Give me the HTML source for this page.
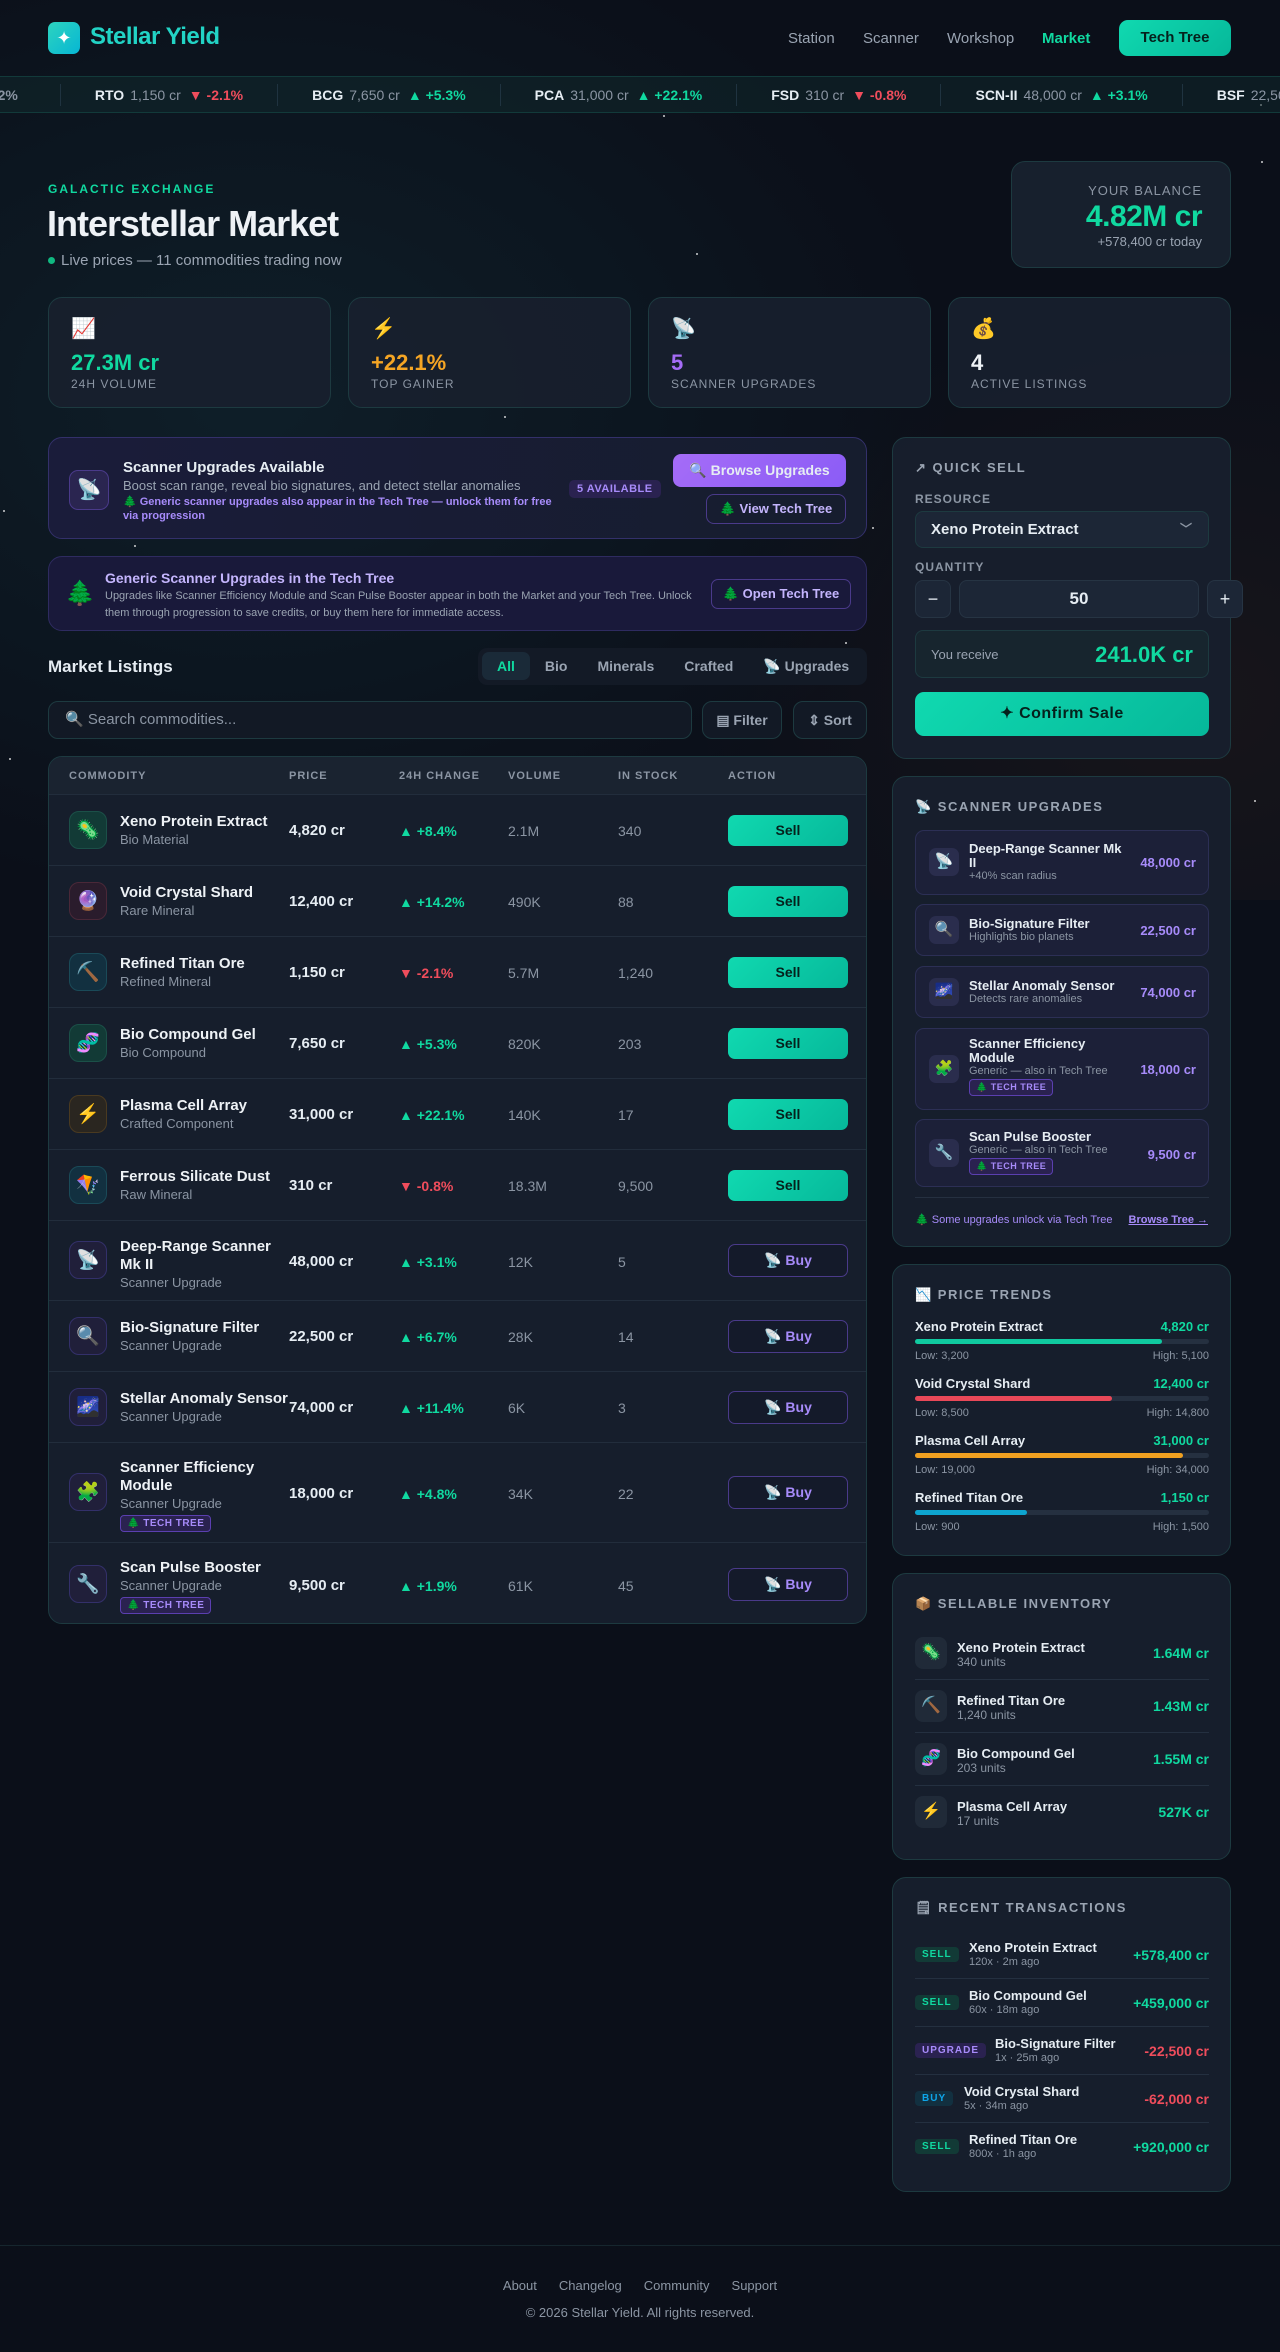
<!DOCTYPE html>
<html><head><meta charset="utf-8"><style>
*{box-sizing:border-box;margin:0;padding:0}
body{width:1280px;height:2352px;background:#0b0f19;font-family:"Liberation Sans",Arial,sans-serif;color:#e6edf3;position:relative;overflow:hidden}
.bgglow{position:absolute;left:0;top:0;width:1280px;height:900px;background:radial-gradient(ellipse 700px 500px at 250px 400px,rgba(20,60,70,.35),transparent),radial-gradient(ellipse 500px 400px at 1200px 700px,rgba(60,40,30,.25),transparent)}
.star{position:absolute;width:2px;height:2px;background:#fff;border-radius:50%;opacity:.8}
.abs{position:absolute}
.nav{position:absolute;left:0;top:0;width:1280px;height:76px}
.logo{position:absolute;left:48px;top:22px;width:32px;height:32px;border-radius:7px;background:linear-gradient(135deg,#2dd4bf,#06b6d4);color:#fff;text-align:center;line-height:32px;font-size:18px}
.brand{position:absolute;left:90px;top:23px;font-size:24px;font-weight:700;color:#22d3c5;letter-spacing:-.5px}
.navl{position:absolute;top:30px;font-size:15px;color:#9aa4b2}
.ttbtn{position:absolute;left:1119px;top:20px;width:112px;height:36px;border-radius:9px;background:linear-gradient(135deg,#10d9b0,#06b89a);color:#05211c;font-weight:700;font-size:15px;text-align:center;line-height:36px}
.ticker{position:absolute;left:0;top:76px;width:1280px;height:37px;background:rgba(16,40,44,.55);border-top:1px solid #123a3a;border-bottom:1px solid #123a3a;white-space:nowrap;overflow:hidden;font-size:14px;line-height:36px}
.ticker .in{position:absolute;left:-30px;top:0;display:flex}
.ti{padding:0 34px;border-right:1px solid #1f3340;height:22px;line-height:22px;margin-top:7px}
.ti b{color:#e6edf3;margin-right:6px}.ti span{color:#8b95a3;margin-right:8px}
.up{color:#10d9a0;font-weight:700}.dn{color:#f04d5c;font-weight:700}
.card{position:absolute;background:rgba(24,32,46,.92);border:1px solid #1d3a40;border-radius:14px}
.lbl{font-size:12px;letter-spacing:1px;color:#8b95a3;text-transform:uppercase}
.tab{display:inline-block;padding:0 15px;height:28px;line-height:28px;font-size:14px;font-weight:700;color:#9aa4b2;border-radius:7px}
.row{position:absolute;left:0;width:819px;border-top:1px solid #222d3c}
.ic{position:absolute;left:20px;width:38px;height:38px;border-radius:10px;text-align:center;line-height:38px;font-size:19px}
.nm{position:absolute;left:71px;font-size:15px;font-weight:700;color:#eef2f6;line-height:18px;width:163px}
.sb{font-size:13px;font-weight:400;color:#8b95a3;display:block;line-height:17px}
.pr{position:absolute;left:240px;font-size:15px;font-weight:700}
.ch{position:absolute;left:350px;font-size:14px}
.vo{position:absolute;left:459px;font-size:14px;color:#8b95a3}
.st{position:absolute;left:569px;font-size:14px;color:#8b95a3}
.sell{position:absolute;left:679px;width:120px;height:31px;border-radius:7px;background:linear-gradient(135deg,#10d9b0,#06b89a);color:#05211c;font-weight:700;font-size:14px;text-align:center;line-height:31px}
.buy{position:absolute;left:679px;width:120px;height:33px;border-radius:7px;border:1px solid #4a3a8a;color:#a78bfa;font-weight:700;font-size:14px;text-align:center;line-height:31px;background:#141a2a}
.tt{display:inline-block;font-size:10px;font-weight:700;color:#a78bfa;border:1px solid #5b3fb0;background:#2a2250;border-radius:4px;padding:1px 6px;margin-top:3px;line-height:13px;letter-spacing:.5px}
.sh{font-size:13px;font-weight:700;letter-spacing:1.5px;color:#9aa4b2;position:absolute;left:22px;top:22px}
.upg{position:absolute;left:22px;width:294px;background:#1c2038;border:1px solid #2c2f55;border-radius:9px}
.upg .i{position:absolute;left:13px;width:30px;height:28px;border-radius:7px;background:#2a2d4d;text-align:center;line-height:28px;font-size:15px}
.upg .t{position:absolute;left:53px;font-size:13px;font-weight:700;line-height:14px;width:160px}
.upg .t small{display:block;font-size:11px;font-weight:400;color:#8b95a3;line-height:13px}
.upg .p{position:absolute;right:12px;font-size:13px;font-weight:700;color:#a78bfa}
.tr{position:absolute;left:22px;width:294px;font-size:13px}
.bar{height:5px;border-radius:3px;background:#253040;margin-top:5px}
.inv{position:absolute;left:22px;width:294px;height:53px;border-bottom:1px solid #243040}
.inv .i{position:absolute;left:0;top:10px;width:32px;height:32px;border-radius:8px;background:#202a38;text-align:center;line-height:32px;font-size:16px}
.inv .t{position:absolute;left:42px;top:14px;font-size:13px;font-weight:700;line-height:14px}
.inv .t small{display:block;font-size:12px;font-weight:400;color:#8b95a3}
.inv .v{position:absolute;right:0;top:18px;font-size:14px;font-weight:700;color:#10d9a0}
.tx{position:absolute;left:22px;width:294px;height:48px;border-bottom:1px solid #243040}
.tx .b{position:absolute;top:16px;font-size:10px;font-weight:700;letter-spacing:1px;padding:2px 7px;border-radius:4px}
.tx .t{position:absolute;top:10px;font-size:13px;font-weight:700;line-height:14px}
.tx .t small{display:block;font-size:11px;font-weight:400;color:#8b95a3}
.tx .v{position:absolute;right:0;top:16px;font-size:14px;font-weight:700}
</style></head><body>
<div class="bgglow"></div>
<div class="star" style="left:663px;top:115px"></div><div class="star" style="left:1260px;top:104px"></div><div class="star" style="left:696px;top:253px"></div><div class="star" style="left:1261px;top:161px"></div><div class="star" style="left:3px;top:510px"></div><div class="star" style="left:134px;top:545px"></div><div class="star" style="left:872px;top:527px"></div><div class="star" style="left:850px;top:577px"></div><div class="star" style="left:1254px;top:800px"></div><div class="star" style="left:9px;top:758px"></div><div class="star" style="left:504px;top:416px"></div><div class="star" style="left:845px;top:642px"></div>

<div class="nav">
<div class="logo">✦</div><div class="brand">Stellar Yield</div>
<div class="navl" style="left:788px">Station</div><div class="navl" style="left:863px">Scanner</div><div class="navl" style="left:947px">Workshop</div><div class="navl" style="left:1042px;color:#10d9a0;font-weight:700">Market</div>
<div class="ttbtn">Tech Tree</div>
</div>
<div class="ticker"><div class="in">
<div class="ti" style="padding-left:0"><span class="up">+14.2%</span></div>
<div class="ti"><b>RTO</b><span>1,150 cr</span><i class="dn" style="font-style:normal">▼ -2.1%</i></div>
<div class="ti"><b>BCG</b><span>7,650 cr</span><i class="up" style="font-style:normal">▲ +5.3%</i></div>
<div class="ti"><b>PCA</b><span>31,000 cr</span><i class="up" style="font-style:normal">▲ +22.1%</i></div>
<div class="ti"><b>FSD</b><span>310 cr</span><i class="dn" style="font-style:normal">▼ -0.8%</i></div>
<div class="ti"><b>SCN-II</b><span>48,000 cr</span><i class="up" style="font-style:normal">▲ +3.1%</i></div>
<div class="ti"><b>BSF</b><span>22,500 cr</span><i class="up" style="font-style:normal">▲ +6.7%</i></div>
</div></div>

<div class="abs" style="left:48px;top:182px;font-size:12px;font-weight:700;letter-spacing:2px;color:#10d9a0">GALACTIC EXCHANGE</div>
<div class="abs" style="left:47px;top:203px;font-size:36px;font-weight:700;letter-spacing:-1px;color:#eef2f6">Interstellar Market</div>
<div class="abs" style="left:48px;top:252px;font-size:15px;color:#9aa4b2"><span style="display:inline-block;width:7px;height:7px;border-radius:50%;background:#10b981;margin-right:6px;vertical-align:1px"></span>Live prices — 11 commodities trading now</div>
<div class="card" style="left:1011px;top:161px;width:220px;height:107px;background:rgba(24,34,48,.9)">
<div class="abs" style="right:28px;top:21px;font-size:13px;letter-spacing:1px;color:#8b95a3">YOUR BALANCE</div>
<div class="abs" style="right:28px;top:38px;font-size:30px;font-weight:700;color:#10d9a0;letter-spacing:-.5px">4.82M cr</div>
<div class="abs" style="right:28px;top:72px;font-size:13px;color:#9aa4b2">+578,400 cr today</div>
</div>

<div class="card" style="left:48px;top:297px;width:283px;height:111px"><div class="abs" style="left:22px;top:18px;font-size:20px">📈</div><div class="abs" style="left:22px;top:52px;font-size:22px;font-weight:700;color:#10d9a0">27.3M cr</div><div class="abs lbl" style="left:22px;top:79px">24H VOLUME</div></div>
<div class="card" style="left:348px;top:297px;width:283px;height:111px"><div class="abs" style="left:22px;top:18px;font-size:20px">⚡</div><div class="abs" style="left:22px;top:52px;font-size:22px;font-weight:700;color:#f5a524">+22.1%</div><div class="abs lbl" style="left:22px;top:79px">TOP GAINER</div></div>
<div class="card" style="left:648px;top:297px;width:283px;height:111px"><div class="abs" style="left:22px;top:18px;font-size:20px">📡</div><div class="abs" style="left:22px;top:52px;font-size:22px;font-weight:700;color:#a56cf7">5</div><div class="abs lbl" style="left:22px;top:79px">SCANNER UPGRADES</div></div>
<div class="card" style="left:948px;top:297px;width:283px;height:111px"><div class="abs" style="left:22px;top:18px;font-size:20px">💰</div><div class="abs" style="left:22px;top:52px;font-size:22px;font-weight:700;color:#eef2f6">4</div><div class="abs lbl" style="left:22px;top:79px">ACTIVE LISTINGS</div></div>

<div class="card" style="left:48px;top:437px;width:819px;height:102px;background:linear-gradient(90deg,#1a1c3a,#161d2e);border-color:#33306a">
<div class="abs" style="left:20px;top:32px;width:40px;height:40px;border-radius:9px;background:#2a2550;border:1px solid #4a3a8a;text-align:center;line-height:38px;font-size:20px">📡</div>
<div class="abs" style="left:74px;top:21px;font-size:15px;font-weight:700">Scanner Upgrades Available</div>
<div class="abs" style="left:74px;top:40px;font-size:13px;color:#9aa4b2">Boost scan range, reveal bio signatures, and detect stellar anomalies</div>
<div class="abs" style="left:74px;top:57px;width:440px;font-size:11px;font-weight:700;color:#a78bfa;line-height:14px">🌲 Generic scanner upgrades also appear in the Tech Tree — unlock them for free via progression</div>
<div class="abs" style="left:520px;top:42px;font-size:11px;font-weight:700;color:#a78bfa;background:#2a2250;border-radius:5px;padding:3px 8px;letter-spacing:.5px">5 AVAILABLE</div>
<div class="abs" style="left:624px;top:16px;width:173px;height:33px;border-radius:8px;background:linear-gradient(135deg,#a56cf7,#8b5cf6);text-align:center;line-height:33px;font-size:14px;font-weight:700">🔍 Browse Upgrades</div>
<div class="abs" style="left:657px;top:56px;width:140px;height:30px;border-radius:8px;border:1px solid #4a3a8a;text-align:center;line-height:28px;font-size:13px;font-weight:700;color:#c4b5fd">🌲 View Tech Tree</div>
</div>
<div class="card" style="left:48px;top:556px;width:819px;height:75px;background:#19193a;border-color:#2e2b60">
<div class="abs" style="left:16px;top:22px;font-size:24px">🌲</div>
<div class="abs" style="left:56px;top:13px;font-size:14px;font-weight:700;color:#c4b5fd">Generic Scanner Upgrades in the Tech Tree</div>
<div class="abs" style="left:56px;top:31px;width:600px;font-size:11px;line-height:17px;color:#9aa4b2">Upgrades like Scanner Efficiency Module and Scan Pulse Booster appear in both the Market and your Tech Tree. Unlock them through progression to save credits, or buy them here for immediate access.</div>
<div class="abs" style="left:662px;top:22px;width:140px;height:30px;border-radius:7px;border:1px solid #4a3a8a;text-align:center;line-height:28px;font-size:13px;font-weight:700;color:#c4b5fd">🌲 Open Tech Tree</div>
</div>

<div class="abs" style="left:48px;top:657px;font-size:17px;font-weight:700">Market Listings</div>
<div class="abs" style="left:478px;top:648px;width:389px;height:37px;background:#131a26;border-radius:9px;padding:4px 0 0 4px;white-space:nowrap;font-size:0">
<span class="tab" style="background:#1a2a38;color:#10d9a0">All</span><span class="tab">Bio</span><span class="tab">Minerals</span><span class="tab">Crafted</span><span class="tab" style="padding-right:0">📡 Upgrades</span></div>
<div class="abs" style="left:48px;top:701px;width:644px;height:38px;border:1px solid #1d3a40;border-radius:10px;background:#121925;font-size:15px;color:#8b95a3;line-height:36px;padding-left:16px">🔍 Search commodities...</div>
<div class="abs" style="left:702px;top:701px;width:80px;height:38px;border:1px solid #1d3a40;border-radius:10px;background:#121925;font-size:14px;font-weight:700;color:#9aa4b2;line-height:36px;text-align:center">▤ Filter</div>
<div class="abs" style="left:793px;top:701px;width:74px;height:38px;border:1px solid #1d3a40;border-radius:10px;background:#121925;font-size:14px;font-weight:700;color:#9aa4b2;line-height:36px;text-align:center">⇕ Sort</div>

<div class="card" style="left:48px;top:756px;width:819px;height:868px;overflow:hidden;background:#161e2c">
<div class="abs" style="left:0;top:0;width:819px;height:37px;background:#1a2330"></div>
<div class="abs lbl" style="left:20px;top:13px;font-size:11px;font-weight:700">COMMODITY</div><div class="abs lbl" style="left:240px;top:13px;font-size:11px;font-weight:700">PRICE</div><div class="abs lbl" style="left:350px;top:13px;font-size:11px;font-weight:700">24H CHANGE</div><div class="abs lbl" style="left:459px;top:13px;font-size:11px;font-weight:700">VOLUME</div><div class="abs lbl" style="left:569px;top:13px;font-size:11px;font-weight:700">IN STOCK</div><div class="abs lbl" style="left:679px;top:13px;font-size:11px;font-weight:700">ACTION</div>

<div class="row" style="top:37px;height:71px"><div class="ic" style="top:16px;background:#123a36;border:1px solid #1b5048">🦠</div><div class="nm" style="top:18px">Xeno Protein Extract<span class="sb">Bio Material</span></div><div class="pr" style="top:27px">4,820 cr</div><div class="ch up" style="top:28px">▲ +8.4%</div><div class="vo" style="top:28px">2.1M</div><div class="st" style="top:28px">340</div><div class="sell" style="top:20px">Sell</div></div>
<div class="row" style="top:108px;height:71px"><div class="ic" style="top:16px;background:#2a1c2c;border:1px solid #4a2838">🔮</div><div class="nm" style="top:18px">Void Crystal Shard<span class="sb">Rare Mineral</span></div><div class="pr" style="top:27px">12,400 cr</div><div class="ch up" style="top:28px">▲ +14.2%</div><div class="vo" style="top:28px">490K</div><div class="st" style="top:28px">88</div><div class="sell" style="top:20px">Sell</div></div>
<div class="row" style="top:179px;height:71px"><div class="ic" style="top:16px;background:#123040;border:1px solid #1a4a58">⛏️</div><div class="nm" style="top:18px">Refined Titan Ore<span class="sb">Refined Mineral</span></div><div class="pr" style="top:27px">1,150 cr</div><div class="ch dn" style="top:28px">▼ -2.1%</div><div class="vo" style="top:28px">5.7M</div><div class="st" style="top:28px">1,240</div><div class="sell" style="top:20px">Sell</div></div>
<div class="row" style="top:250px;height:71px"><div class="ic" style="top:16px;background:#123a36;border:1px solid #1b5048">🧬</div><div class="nm" style="top:18px">Bio Compound Gel<span class="sb">Bio Compound</span></div><div class="pr" style="top:27px">7,650 cr</div><div class="ch up" style="top:28px">▲ +5.3%</div><div class="vo" style="top:28px">820K</div><div class="st" style="top:28px">203</div><div class="sell" style="top:20px">Sell</div></div>
<div class="row" style="top:321px;height:71px"><div class="ic" style="top:16px;background:#2a2620;border:1px solid #4a3a20">⚡</div><div class="nm" style="top:18px">Plasma Cell Array<span class="sb">Crafted Component</span></div><div class="pr" style="top:27px">31,000 cr</div><div class="ch up" style="top:28px">▲ +22.1%</div><div class="vo" style="top:28px">140K</div><div class="st" style="top:28px">17</div><div class="sell" style="top:20px">Sell</div></div>
<div class="row" style="top:392px;height:71px"><div class="ic" style="top:16px;background:#123040;border:1px solid #1a4a58">🪁</div><div class="nm" style="top:18px">Ferrous Silicate Dust<span class="sb">Raw Mineral</span></div><div class="pr" style="top:27px">310 cr</div><div class="ch dn" style="top:28px">▼ -0.8%</div><div class="vo" style="top:28px">18.3M</div><div class="st" style="top:28px">9,500</div><div class="sell" style="top:20px">Sell</div></div>
<div class="row" style="top:463px;height:80px"><div class="ic" style="top:20px;background:#201f3a;border:1px solid #33306a">📡</div><div class="nm" style="top:17px;width:160px">Deep-Range Scanner Mk II<span class="sb">Scanner Upgrade</span></div><div class="pr" style="top:32px">48,000 cr</div><div class="ch up" style="top:33px">▲ +3.1%</div><div class="vo" style="top:33px">12K</div><div class="st" style="top:33px">5</div><div class="buy" style="top:23px">📡 Buy</div></div>
<div class="row" style="top:543px;height:71px"><div class="ic" style="top:16px;background:#201f3a;border:1px solid #33306a">🔍</div><div class="nm" style="top:18px">Bio-Signature Filter<span class="sb">Scanner Upgrade</span></div><div class="pr" style="top:27px">22,500 cr</div><div class="ch up" style="top:28px">▲ +6.7%</div><div class="vo" style="top:28px">28K</div><div class="st" style="top:28px">14</div><div class="buy" style="top:19px">📡 Buy</div></div>
<div class="row" style="top:614px;height:71px"><div class="ic" style="top:16px;background:#201f3a;border:1px solid #33306a">🌌</div><div class="nm" style="top:18px;width:170px">Stellar Anomaly Sensor<span class="sb">Scanner Upgrade</span></div><div class="pr" style="top:27px">74,000 cr</div><div class="ch up" style="top:28px">▲ +11.4%</div><div class="vo" style="top:28px">6K</div><div class="st" style="top:28px">3</div><div class="buy" style="top:19px">📡 Buy</div></div>
<div class="row" style="top:685px;height:100px"><div class="ic" style="top:30px;background:#201f3a;border:1px solid #33306a">🧩</div><div class="nm" style="top:16px">Scanner Efficiency Module<span class="sb">Scanner Upgrade</span><span class="tt">🌲 TECH TREE</span></div><div class="pr" style="top:42px">18,000 cr</div><div class="ch up" style="top:43px">▲ +4.8%</div><div class="vo" style="top:43px">34K</div><div class="st" style="top:43px">22</div><div class="buy" style="top:33px">📡 Buy</div></div>
<div class="row" style="top:785px;height:83px"><div class="ic" style="top:22px;background:#201f3a;border:1px solid #33306a">🔧</div><div class="nm" style="top:16px">Scan Pulse Booster<span class="sb">Scanner Upgrade</span><span class="tt">🌲 TECH TREE</span></div><div class="pr" style="top:34px">9,500 cr</div><div class="ch up" style="top:35px">▲ +1.9%</div><div class="vo" style="top:35px">61K</div><div class="st" style="top:35px">45</div><div class="buy" style="top:25px">📡 Buy</div></div>
</div>

<div class="card" style="left:892px;top:437px;width:339px;height:322px">
<div class="sh">↗ QUICK SELL</div>
<div class="abs lbl" style="left:22px;top:54px;font-weight:700">RESOURCE</div>
<div class="abs" style="left:22px;top:73px;width:294px;height:37px;border:1px solid #1d3a40;border-radius:8px;background:#1c2636;font-size:15px;font-weight:700;line-height:35px;padding-left:15px">Xeno Protein Extract<span style="position:absolute;right:16px;color:#8b95a3;font-size:12px">﹀</span></div>
<div class="abs lbl" style="left:22px;top:122px;font-weight:700">QUANTITY</div>
<div class="abs" style="left:22px;top:142px;width:36px;height:38px;border:1px solid #263443;border-radius:8px;background:#1c2636;text-align:center;line-height:36px;font-size:18px">−</div>
<div class="abs" style="left:66px;top:142px;width:240px;height:38px;border:1px solid #263443;border-radius:8px;background:#1c2636;text-align:center;line-height:36px;font-size:17px;font-weight:700">50</div>
<div class="abs" style="left:314px;top:142px;width:36px;height:38px;border:1px solid #263443;border-radius:8px;background:#1c2636;text-align:center;line-height:36px;font-size:18px">+</div>
<div class="abs" style="left:22px;top:192px;width:294px;height:48px;border:1px solid #1d3a40;border-radius:8px;background:#17252e"><span class="abs" style="left:15px;top:16px;font-size:13px;color:#9aa4b2">You receive</span><span class="abs" style="right:15px;top:11px;font-size:22px;font-weight:700;color:#10d9a0">241.0K cr</span></div>
<div class="abs" style="left:22px;top:254px;width:294px;height:44px;border-radius:9px;background:linear-gradient(135deg,#10d9b0,#06b89a);color:#05211c;text-align:center;line-height:44px;font-size:16px;font-weight:700;letter-spacing:.5px">✦ Confirm Sale</div>
</div>

<div class="card" style="left:892px;top:776px;width:339px;height:471px">
<div class="sh" style="top:22px">📡 SCANNER UPGRADES</div>
<div class="upg" style="top:53px;height:65px"><div class="i" style="top:17px">📡</div><div class="t" style="top:11px">Deep-Range Scanner Mk II<small>+40% scan radius</small></div><div class="p" style="top:24px">48,000 cr</div></div>
<div class="upg" style="top:127px;height:52px"><div class="i" style="top:11px">🔍</div><div class="t" style="top:12px">Bio-Signature Filter<small>Highlights bio planets</small></div><div class="p" style="top:18px">22,500 cr</div></div>
<div class="upg" style="top:189px;height:52px"><div class="i" style="top:11px">🌌</div><div class="t" style="top:12px">Stellar Anomaly Sensor<small>Detects rare anomalies</small></div><div class="p" style="top:18px">74,000 cr</div></div>
<div class="upg" style="top:251px;height:82px"><div class="i" style="top:26px">🧩</div><div class="t" style="top:8px">Scanner Efficiency Module<small>Generic — also in Tech Tree</small><span class="tt" style="font-size:9px;margin-top:1px">🌲 TECH TREE</span></div><div class="p" style="top:33px">18,000 cr</div></div>
<div class="upg" style="top:342px;height:68px"><div class="i" style="top:19px">🔧</div><div class="t" style="top:10px">Scan Pulse Booster<small>Generic — also in Tech Tree</small><span class="tt" style="font-size:9px;margin-top:1px">🌲 TECH TREE</span></div><div class="p" style="top:27px">9,500 cr</div></div>
<div class="abs" style="left:22px;top:420px;width:294px;border-top:1px solid #253040"></div>
<div class="abs" style="left:22px;top:436px;font-size:11px;color:#a78bfa">🌲 Some upgrades unlock via Tech Tree</div>
<div class="abs" style="right:22px;top:437px;font-size:11px;font-weight:700;color:#a78bfa;text-decoration:underline">Browse Tree →</div>
</div>

<div class="card" style="left:892px;top:1264px;width:339px;height:292px">
<div class="sh">📉 PRICE TRENDS</div>
<div class="tr" style="top:54px"><b>Xeno Protein Extract</b><b style="float:right;color:#10d9a0">4,820 cr</b><div class="bar"><div style="width:84%;height:5px;border-radius:3px;background:#10c9a0"></div></div><div style="font-size:11px;color:#8b95a3;margin-top:6px">Low: 3,200<span style="float:right">High: 5,100</span></div></div>
<div class="tr" style="top:111px"><b>Void Crystal Shard</b><b style="float:right;color:#10d9a0">12,400 cr</b><div class="bar"><div style="width:67%;height:5px;border-radius:3px;background:#e84858"></div></div><div style="font-size:11px;color:#8b95a3;margin-top:6px">Low: 8,500<span style="float:right">High: 14,800</span></div></div>
<div class="tr" style="top:168px"><b>Plasma Cell Array</b><b style="float:right;color:#10d9a0">31,000 cr</b><div class="bar"><div style="width:91%;height:5px;border-radius:3px;background:#f0a020"></div></div><div style="font-size:11px;color:#8b95a3;margin-top:6px">Low: 19,000<span style="float:right">High: 34,000</span></div></div>
<div class="tr" style="top:225px"><b>Refined Titan Ore</b><b style="float:right;color:#10d9a0">1,150 cr</b><div class="bar"><div style="width:38%;height:5px;border-radius:3px;background:#0ea5d0"></div></div><div style="font-size:11px;color:#8b95a3;margin-top:6px">Low: 900<span style="float:right">High: 1,500</span></div></div>
</div>

<div class="card" style="left:892px;top:1573px;width:339px;height:287px">
<div class="sh">📦 SELLABLE INVENTORY</div>
<div class="inv" style="top:53px"><div class="i">🦠</div><div class="t">Xeno Protein Extract<small>340 units</small></div><div class="v">1.64M cr</div></div>
<div class="inv" style="top:106px"><div class="i">⛏️</div><div class="t">Refined Titan Ore<small>1,240 units</small></div><div class="v">1.43M cr</div></div>
<div class="inv" style="top:159px"><div class="i">🧬</div><div class="t">Bio Compound Gel<small>203 units</small></div><div class="v">1.55M cr</div></div>
<div class="inv" style="top:212px;border:none"><div class="i">⚡</div><div class="t">Plasma Cell Array<small>17 units</small></div><div class="v">527K cr</div></div>
</div>

<div class="card" style="left:892px;top:1877px;width:339px;height:315px">
<div class="sh">🗒 RECENT TRANSACTIONS</div>
<div class="tx" style="top:53px"><span class="b" style="left:0;background:#123a36;color:#10d9a0">SELL</span><div class="t" style="left:54px">Xeno Protein Extract<small>120x · 2m ago</small></div><div class="v" style="color:#10d9a0">+578,400 cr</div></div>
<div class="tx" style="top:101px"><span class="b" style="left:0;background:#123a36;color:#10d9a0">SELL</span><div class="t" style="left:54px">Bio Compound Gel<small>60x · 18m ago</small></div><div class="v" style="color:#10d9a0">+459,000 cr</div></div>
<div class="tx" style="top:149px"><span class="b" style="left:0;background:#2a2250;color:#a78bfa">UPGRADE</span><div class="t" style="left:80px">Bio-Signature Filter<small>1x · 25m ago</small></div><div class="v" style="color:#f04d5c">-22,500 cr</div></div>
<div class="tx" style="top:197px"><span class="b" style="left:0;background:#123040;color:#0ea5e9">BUY</span><div class="t" style="left:49px">Void Crystal Shard<small>5x · 34m ago</small></div><div class="v" style="color:#f04d5c">-62,000 cr</div></div>
<div class="tx" style="top:245px;border:none"><span class="b" style="left:0;background:#123a36;color:#10d9a0">SELL</span><div class="t" style="left:54px">Refined Titan Ore<small>800x · 1h ago</small></div><div class="v" style="color:#10d9a0">+920,000 cr</div></div>
</div>

<div class="abs" style="left:0;top:2245px;width:1280px;border-top:1px solid #16262e"></div>
<div class="abs" style="left:0;top:2278px;width:1280px;text-align:center;font-size:13px;color:#8b95a3"><span style="margin:0 11px">About</span><span style="margin:0 11px">Changelog</span><span style="margin:0 11px">Community</span><span style="margin:0 11px">Support</span></div>
<div class="abs" style="left:0;top:2305px;width:1280px;text-align:center;font-size:13px;color:#8b95a3">© 2026 Stellar Yield. All rights reserved.</div>
</body></html>
